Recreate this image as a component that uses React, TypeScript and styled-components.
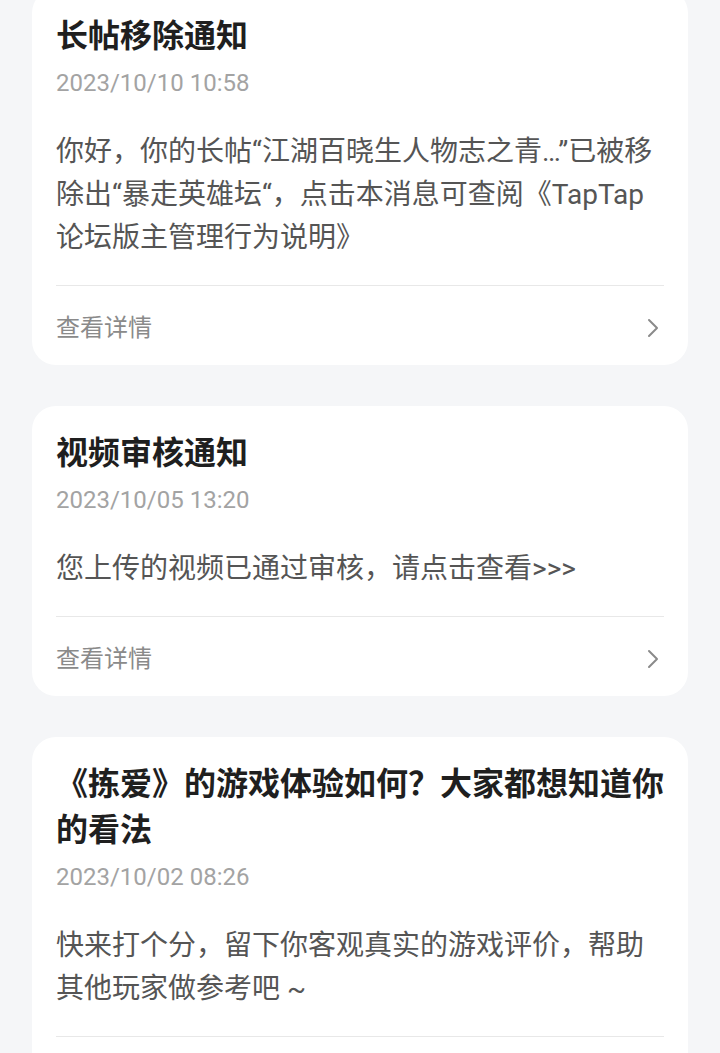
import React from "react";
import styled, { createGlobalStyle } from "styled-components";

const GlobalStyle = createGlobalStyle`
  html, body {
    margin: 0;
    padding: 0;
    background: #f5f6f8;
  }
  body {
    font-family: Roboto, "Noto Sans CJK SC", sans-serif;
    overflow: hidden;
  }
`;

const Page = styled.div`
  width: 720px;
  height: 1053px;
  overflow: hidden;
  background: #f5f6f8;
`;

const List = styled.div`
  display: flex;
  flex-direction: column;
  gap: 41px;
  padding: 0 32px;
  margin-top: -11px;
`;

const Card = styled.div`
  background: #ffffff;
  border-radius: 24px;
  padding: 24px 24px 0;
  display: flex;
  flex-direction: column;
`;

const Title = styled.div`
  font-size: 32px;
  line-height: 46px;
  font-weight: 700;
  color: #1f1f1f;
`;

const DateText = styled.div`
  margin-top: 8px;
  font-size: 24px;
  line-height: 32px;
  color: #a3a3a3;
`;

const Body = styled.div`
  margin-top: 31px;
  font-size: 28px;
  line-height: 43px;
  color: #555555;
`;

const Divider = styled.div`
  margin-top: 26px;
  height: 1px;
  background: #e8e8e8;
`;

const Footer = styled.div`
  display: flex;
  align-items: center;
  justify-content: space-between;
  padding: 26px 0 21px;
  font-size: 24px;
  line-height: 32px;
  color: #8a8a8a;
`;

const Chevron = styled.svg`
  width: 14px;
  height: 22px;
  margin-right: 4px;
`;

type Msg = { title: string; date: string; body: string };

const messages: Msg[] = [
  {
    title: "长帖移除通知",
    date: "2023/10/10 10:58",
    body: "你好，你的长帖\u201C江湖百晓生人物志之青\u2026\u201D已被移除出\u201C暴走英雄坛\u201C，点击本消息可查阅《TapTap论坛版主管理行为说明》",
  },
  {
    title: "视频审核通知",
    date: "2023/10/05 13:20",
    body: "您上传的视频已通过审核，请点击查看>>>",
  },
  {
    title: "《拣爱》的游戏体验如何？大家都想知道你的看法",
    date: "2023/10/02 08:26",
    body: "快来打个分，留下你客观真实的游戏评价，帮助其他玩家做参考吧 ~",
  },
];

export default function App() {
  return (
    <Page>
      <GlobalStyle />
      <List>
        {messages.map((m) => (
          <Card key={m.date}>
            <Title>{m.title}</Title>
            <DateText>{m.date}</DateText>
            <Body>{m.body}</Body>
            <Divider />
            <Footer>
              <span>查看详情</span>
              <Chevron viewBox="0 0 14 22">
                <polyline
                  points="3,3 11,11 3,19"
                  fill="none"
                  stroke="#8a8a8a"
                  strokeWidth="2"
                  strokeLinecap="round"
                  strokeLinejoin="round"
                />
              </Chevron>
            </Footer>
          </Card>
        ))}
      </List>
    </Page>
  );
}
